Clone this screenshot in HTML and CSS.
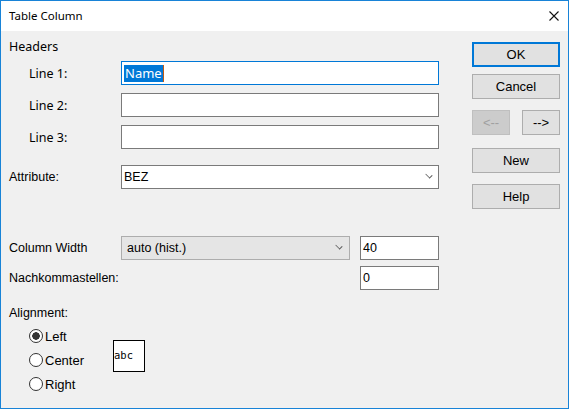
FILE: index.html
```html
<!DOCTYPE html>
<html>
<head>
  <title>Table Column</title>
  <link rel="stylesheet" href="styles.css">
</head>
<body>
  <div class="window">
    <div class="title-bar">
      <span class="title">Table Column</span>
      <svg class="close" width="10" height="10" viewBox="0 0 10 10">
        <path d="M0.5 0.5 L9.5 9.5 M9.5 0.5 L0.5 9.5" stroke="#111" stroke-width="1.1" fill="none"/>
      </svg>
    </div>

    <div class="dialog">
      <div class="form">
        <div class="group-label">Headers</div>

        <div class="field">
          <label class="sub">Line 1:</label>
          <div class="textbox focused"><span class="selected">Name</span><span class="caret"></span></div>
        </div>
        <div class="field">
          <label class="sub">Line 2:</label>
          <div class="textbox"></div>
        </div>
        <div class="field">
          <label class="sub">Line 3:</label>
          <div class="textbox"></div>
        </div>

        <div class="field attr-row">
          <label>Attribute:</label>
          <div class="textbox combo"><span class="value">BEZ</span><span class="chevron"></span></div>
        </div>

        <div class="field width-row">
          <label>Column Width</label>
          <div class="dropdown"><span class="value">auto (hist.)</span><span class="chevron"></span></div>
          <div class="textbox num">40</div>
        </div>
        <div class="field decimals-row">
          <label>Nachkommastellen:</label>
          <span></span>
          <div class="textbox num">0</div>
        </div>

        <div class="group-label align-label">Alignment:</div>
        <div class="align-box">
          <div class="radios">
            <div class="radio checked">Left</div>
            <div class="radio">Center</div>
            <div class="radio">Right</div>
          </div>
          <div class="preview">abc</div>
        </div>
      </div>

      <div class="buttons">
        <button class="btn default">OK</button>
        <button class="btn cancel">Cancel</button>
        <div class="nav">
          <button class="btn small" disabled>&lt;--</button>
          <button class="btn small">--&gt;</button>
        </div>
        <button class="btn new">New</button>
        <button class="btn help">Help</button>
      </div>
    </div>
  </div>
</body>
</html>
```

FILE: styles.css
```css
body {
  margin: 0;
  padding: 0;
  background-color: #fff;
  font-family: "Liberation Sans", Arial, sans-serif;
  font-size: 12.5px;
  color: #000;
}

.window {
  width: 567px;
  height: 407px;
  border: 1px solid #1883d7;
  background-color: #f0f0f0;
  display: flex;
  flex-direction: column;
}

.title-bar {
  height: 30px;
  background-color: #fff;
  display: flex;
  align-items: center;
  justify-content: space-between;
  padding: 0 9px 0 8px;
}

.title {
  font-family: "Noto Sans", sans-serif;
  font-size: 11.5px;
  margin-top: -1px;
}

.close {
  margin-top: -1px;
}

.dialog {
  flex: 1;
  display: flex;
  padding: 0 8px;
}

.form {
  width: 430px;
  padding-top: 8px;
}

.group-label {
  font-family: "Noto Sans", sans-serif;
  font-size: 12.5px;
  line-height: 16px;
  height: 16px;
  margin-bottom: 6px;
}

.align-label {
  font-family: "Liberation Sans", Arial, sans-serif;
  margin-top: 15px;
  margin-bottom: 3px;
}

/* grid rows are block boxes, so their vertical margins collapse */
.field {
  display: grid;
  grid-template-columns: 112px 318px;
  align-items: center;
  height: 24px;
  margin-bottom: 8px;
}

.field label.sub {
  padding-left: 20px;
  font-family: "Noto Sans", sans-serif;
  font-size: 12.5px;
}

.textbox {
  box-sizing: border-box;
  height: 24px;
  border: 1px solid #7a7a7a;
  background-color: #fff;
  display: flex;
  align-items: center;
  padding-left: 2px;
}

.textbox.focused {
  border-color: #0078d7;
}

.selected {
  background-color: #0078d7;
  color: #fff;
  font-family: "Noto Sans", sans-serif;
  font-size: 13px;
  line-height: 17px;
  padding: 0 1px;
}

.caret {
  width: 1px;
  height: 17px;
  background-color: #c25a12;
}

.attr-row {
  margin-top: 16px;
}

.combo {
  justify-content: space-between;
  padding-right: 6px;
}

.chevron {
  width: 5px;
  height: 5px;
  border-right: 1px solid #555;
  border-bottom: 1px solid #555;
  transform: rotate(45deg) scaleY(0.7);
  margin-top: -4px;
}

.width-row,
.decimals-row {
  grid-template-columns: 112px 229px 89px;
}

.width-row {
  margin-top: 47px;
  margin-bottom: 6px;
}

.dropdown {
  box-sizing: border-box;
  height: 24px;
  border: 1px solid #adadad;
  background-color: #e5e5e5;
  display: flex;
  align-items: center;
  justify-content: space-between;
  padding: 0 7px 0 5px;
}

.num {
  margin-left: 10px;
  padding-left: 2px;
}

.align-box {
  display: flex;
  align-items: flex-start;
}

.radios {
  padding-left: 20px;
  width: 84px;
}

.radio {
  height: 24px;
  display: flex;
  align-items: center;
  gap: 2px;
  font-size: 13px;
}

.radio::before {
  content: "";
  box-sizing: border-box;
  width: 14px;
  height: 14px;
  border: 1px solid #333;
  border-radius: 50%;
  background-color: #fff;
}

.radio.checked::before {
  background: radial-gradient(circle, #333 0 3.5px, #fff 4px);
}

.preview {
  box-sizing: border-box;
  width: 32px;
  height: 32px;
  margin-top: 16px;
  border: 1px solid #000;
  background-color: #fff;
  font-family: "DejaVu Sans Mono", monospace;
  font-size: 10.5px;
  display: flex;
  align-items: center;
  padding-bottom: 2px;
}

.buttons {
  width: 88px;
  margin-left: auto;
  padding-top: 11px;
  display: flex;
  flex-direction: column;
}

.btn {
  box-sizing: border-box;
  width: 88px;
  height: 25px;
  border: 1px solid #adadad;
  background-color: #e1e1e1;
  font-family: "Liberation Sans", Arial, sans-serif;
  font-size: 13px;
  color: #000;
  padding: 0;
}

.btn.default {
  border: 2px solid #0078d7;
}

.btn.cancel {
  margin-top: 7px;
}

.nav {
  display: flex;
  justify-content: space-between;
  margin-top: 11px;
}

.btn.small {
  width: 38px;
}

.btn[disabled] {
  background-color: #cccccc;
  border-color: #bfbfbf;
  color: #a0a0a0;
}

.btn.new {
  margin-top: 13px;
}

.btn.help {
  margin-top: 11px;
}
```
